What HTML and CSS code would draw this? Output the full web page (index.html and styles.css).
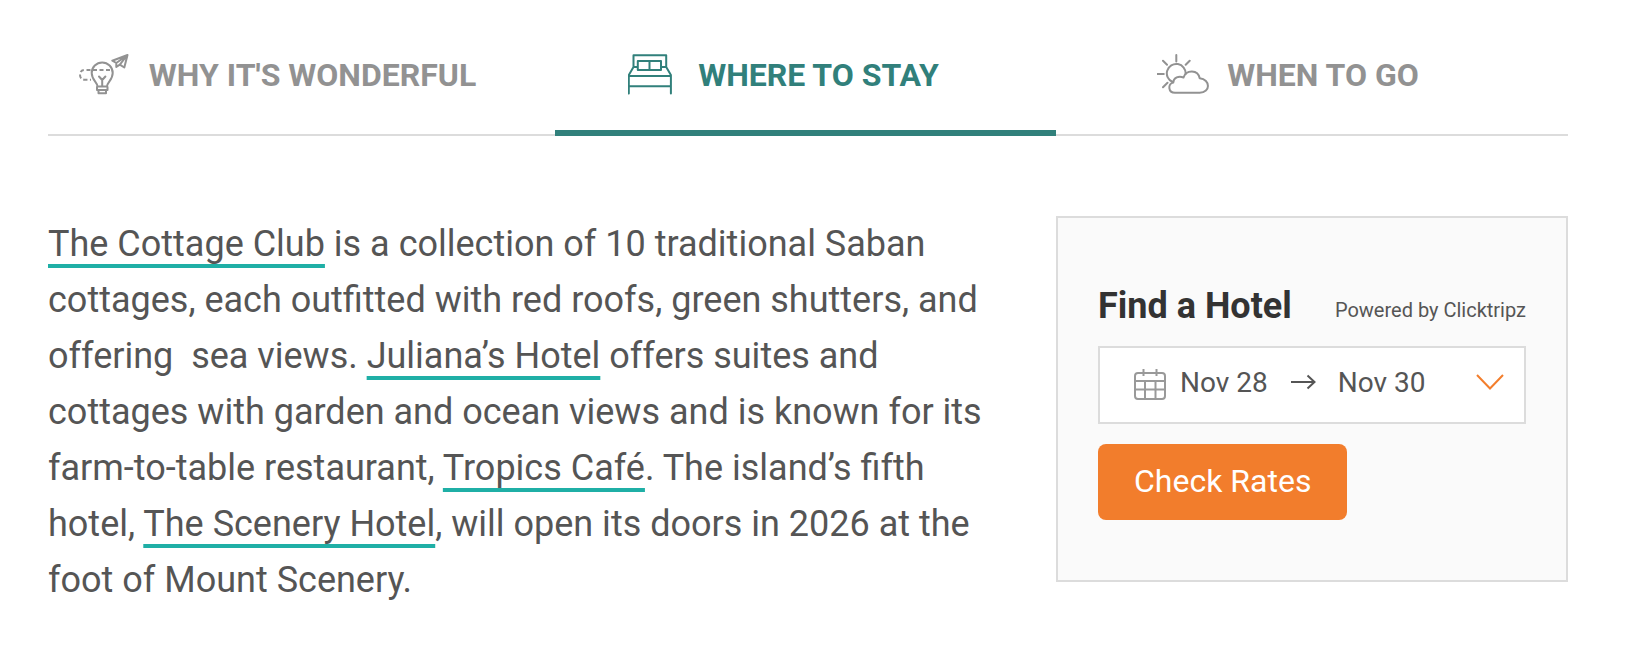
FILE: index.html
```html
<!DOCTYPE html>
<html lang="en">
<head>
<meta charset="utf-8">
<meta name="viewport" content="width=device-width, initial-scale=1">
<title>Where to Stay</title>
<link rel="stylesheet" href="styles.css">
</head>
<body>
<main class="page">
  <div class="tabs" role="tablist">
    <button class="tab" type="button" role="tab" aria-selected="false">
      <svg class="tab-icon" viewBox="0 0 52 42" aria-hidden="true">
        <path d="M18.500 32.500c0-4-5.800-6.500-5.800-13.500a10.500 10.500 0 0 1 21 0c0 7-5.700 9.500-5.700 13.500z"/>
        <path d="M18 33v3h10.500v-3M19.500 36v3.200h7.500V36M23.200 32v-6M20 22.500l3.200 3.500 3.200-3.500"/>
        <path stroke-linecap="butt" stroke-dasharray="4 2.500" d="M31 16H6q-5 0-5 4.800T6 25.700h6"/>
        <path d="M48.500 1 33.300 6.700l4 2.300zM48.500 1l-3.200 12.500-4.500-2.800zM37.300 9v4l3.500-2.300"/>
      </svg>
      <span>WHY IT'S WONDERFUL</span>
    </button>
    <button class="tab tab-active" type="button" role="tab" aria-selected="true">
      <svg class="tab-icon" viewBox="0 0 52 42" aria-hidden="true">
        <path d="M5.500 13V1.300h32.700V13M5.500 13h4.300M33 13h5.200M9.800 7H33v9H9.800zM21.500 7v9M5.500 13 .8 21v18.500M38.200 13l4.700 8v18.500M.8 22h42.100M.8 32.300h42.100"/>
      </svg>
      <span>WHERE TO STAY</span>
    </button>
    <button class="tab" type="button" role="tab" aria-selected="false">
      <svg class="tab-icon" viewBox="0 0 52 42" aria-hidden="true">
        <path d="M15.600 28A9.400 9.400 0 1 1 28.600 20M19.300 1v6.500M6 6.700l4 4M32.700 6.700l-4 4M.3 20h6.500M6 33.300l4.500-4.500"/>
        <path d="M18 38.700c-7 0-7.500-9-1.700-10.200 0-5 5.700-7 10.200-5C29 15.500 41 15 42.700 24.300c11 1 11 14.400 0 14.400z"/>
      </svg>
      <span>WHEN TO GO</span>
    </button>
  </div>

  <div class="content">
    <p class="article"><a href="#cottage-club">The Cottage Club</a> is a collection of 10 traditional Saban cottages, each outfitted with red roofs, green shutters, and offering&nbsp; sea views. <a href="#julianas">Juliana’s Hotel</a> offers suites and cottages with garden and ocean views and is known for its farm-to-table restaurant, <a href="#tropics">Tropics Café</a>. The island’s fifth hotel, <a href="#scenery">The Scenery Hotel</a>, will open its doors in 2026 at the foot of Mount Scenery.</p>

    <aside class="finder">
      <div class="finder-head">
        <h2 class="finder-title">Find a Hotel</h2>
        <span class="finder-credit">Powered by Clicktripz</span>
      </div>
      <button class="dates" type="button" aria-label="Dates: Nov 28 to Nov 30">
        <svg class="calendar" viewBox="0 0 32 32" aria-hidden="true">
          <path d="M4 5h24q3 0 3 3v20q0 3-3 3H4q-3 0-3-3V8q0-3 3-3zM9.500 1v7M22.500 1v7M1 13h30M1 21.500h30M11 13v18M21.500 13v18"/>
        </svg>
        <span class="date">Nov 28</span>
        <svg class="arrow" viewBox="0 0 26 16" aria-hidden="true"><path d="M1 8h23M17.500 1.500 24.500 8l-7 6.500"/></svg>
        <span class="date">Nov 30</span>
        <svg class="chevron" viewBox="0 0 28 16" aria-hidden="true"><path d="M1 1l13 13.500L27 1"/></svg>
      </button>
      <button class="submit" type="button">Check Rates</button>
    </aside>
  </div>
</main>
</body>
</html>
```
FILE: styles.css
```css
* {
  box-sizing: border-box;
}

body {
  margin: 0;
  background: #fff;
  color: #555;
  font-family: Roboto, "Liberation Sans", sans-serif;
}

button {
  font-family: inherit;
  cursor: pointer;
}

svg {
  display: block;
  flex: none;
  fill: none;
  stroke: currentColor;
}

.page {
  padding: 16px 64px 48px 48px;
}

.tabs {
  display: grid;
  grid-template-columns: 507fr 501fr 512fr;
}

.tab {
  display: flex;
  align-items: center;
  justify-content: center;
  gap: 18px;
  height: 120px;
  padding: 0 48px 0 0;
  border: 0;
  border-bottom: 2px solid #dcdcdc;
  background: none;
  color: #929292;
  font-size: 32px;
  font-weight: 700;
  line-height: 40px;
  white-space: nowrap;
}

.tab-active {
  padding-top: 4px;
  padding-right: 44px;
  border-bottom: 6px solid #31807b;
  color: #31807b;
}

.tab-icon {
  width: 52px;
  height: 42px;
  stroke-width: 2;
  stroke-linecap: round;
  stroke-linejoin: round;
}

.content {
  display: grid;
  grid-template-columns: minmax(0, 1fr) 512px;
  align-items: start;
  gap: 60px;
  padding-top: 80px;
}

.article {
  margin: 0;
  font-size: 36px;
  line-height: 56px;
}

.article a {
  color: inherit;
  text-decoration: underline 4px #1fafa6;
  text-decoration-skip-ink: none;
  text-underline-offset: 8px;
}

.finder {
  padding: 64px 40px 60px;
  border: 2px solid #dcdcdc;
  background: #fafafa;
}

.finder-head {
  display: flex;
  align-items: flex-end;
  justify-content: space-between;
  margin-bottom: 16px;
  white-space: nowrap;
}

.finder-title {
  margin: 0;
  color: #333;
  font-size: 36px;
  font-weight: 700;
  line-height: 48px;
}

.finder-credit {
  font-size: 20px;
  line-height: 40px;
}

.dates {
  display: flex;
  align-items: center;
  width: 100%;
  height: 78px;
  padding: 0 20px 6px 34px;
  border: 2px solid #dcdcdc;
  background: #fff;
  color: #555;
  font-size: 28px;
}

.calendar {
  width: 32px;
  height: 32px;
  margin: 4px 14px 0 0;
  color: #999;
  stroke-width: 2;
}

.arrow {
  width: 26px;
  height: 16px;
  margin: 0 22px;
  stroke-width: 2;
}

.chevron {
  width: 28px;
  height: 16px;
  margin-left: auto;
  color: #f37e2c;
  stroke-width: 2;
}

.submit {
  display: block;
  height: 76px;
  margin-top: 20px;
  padding: 0 36px 2px;
  border: 0;
  border-radius: 8px;
  background: #f27d2c;
  color: #fff;
  font-size: 32px;
}
```
